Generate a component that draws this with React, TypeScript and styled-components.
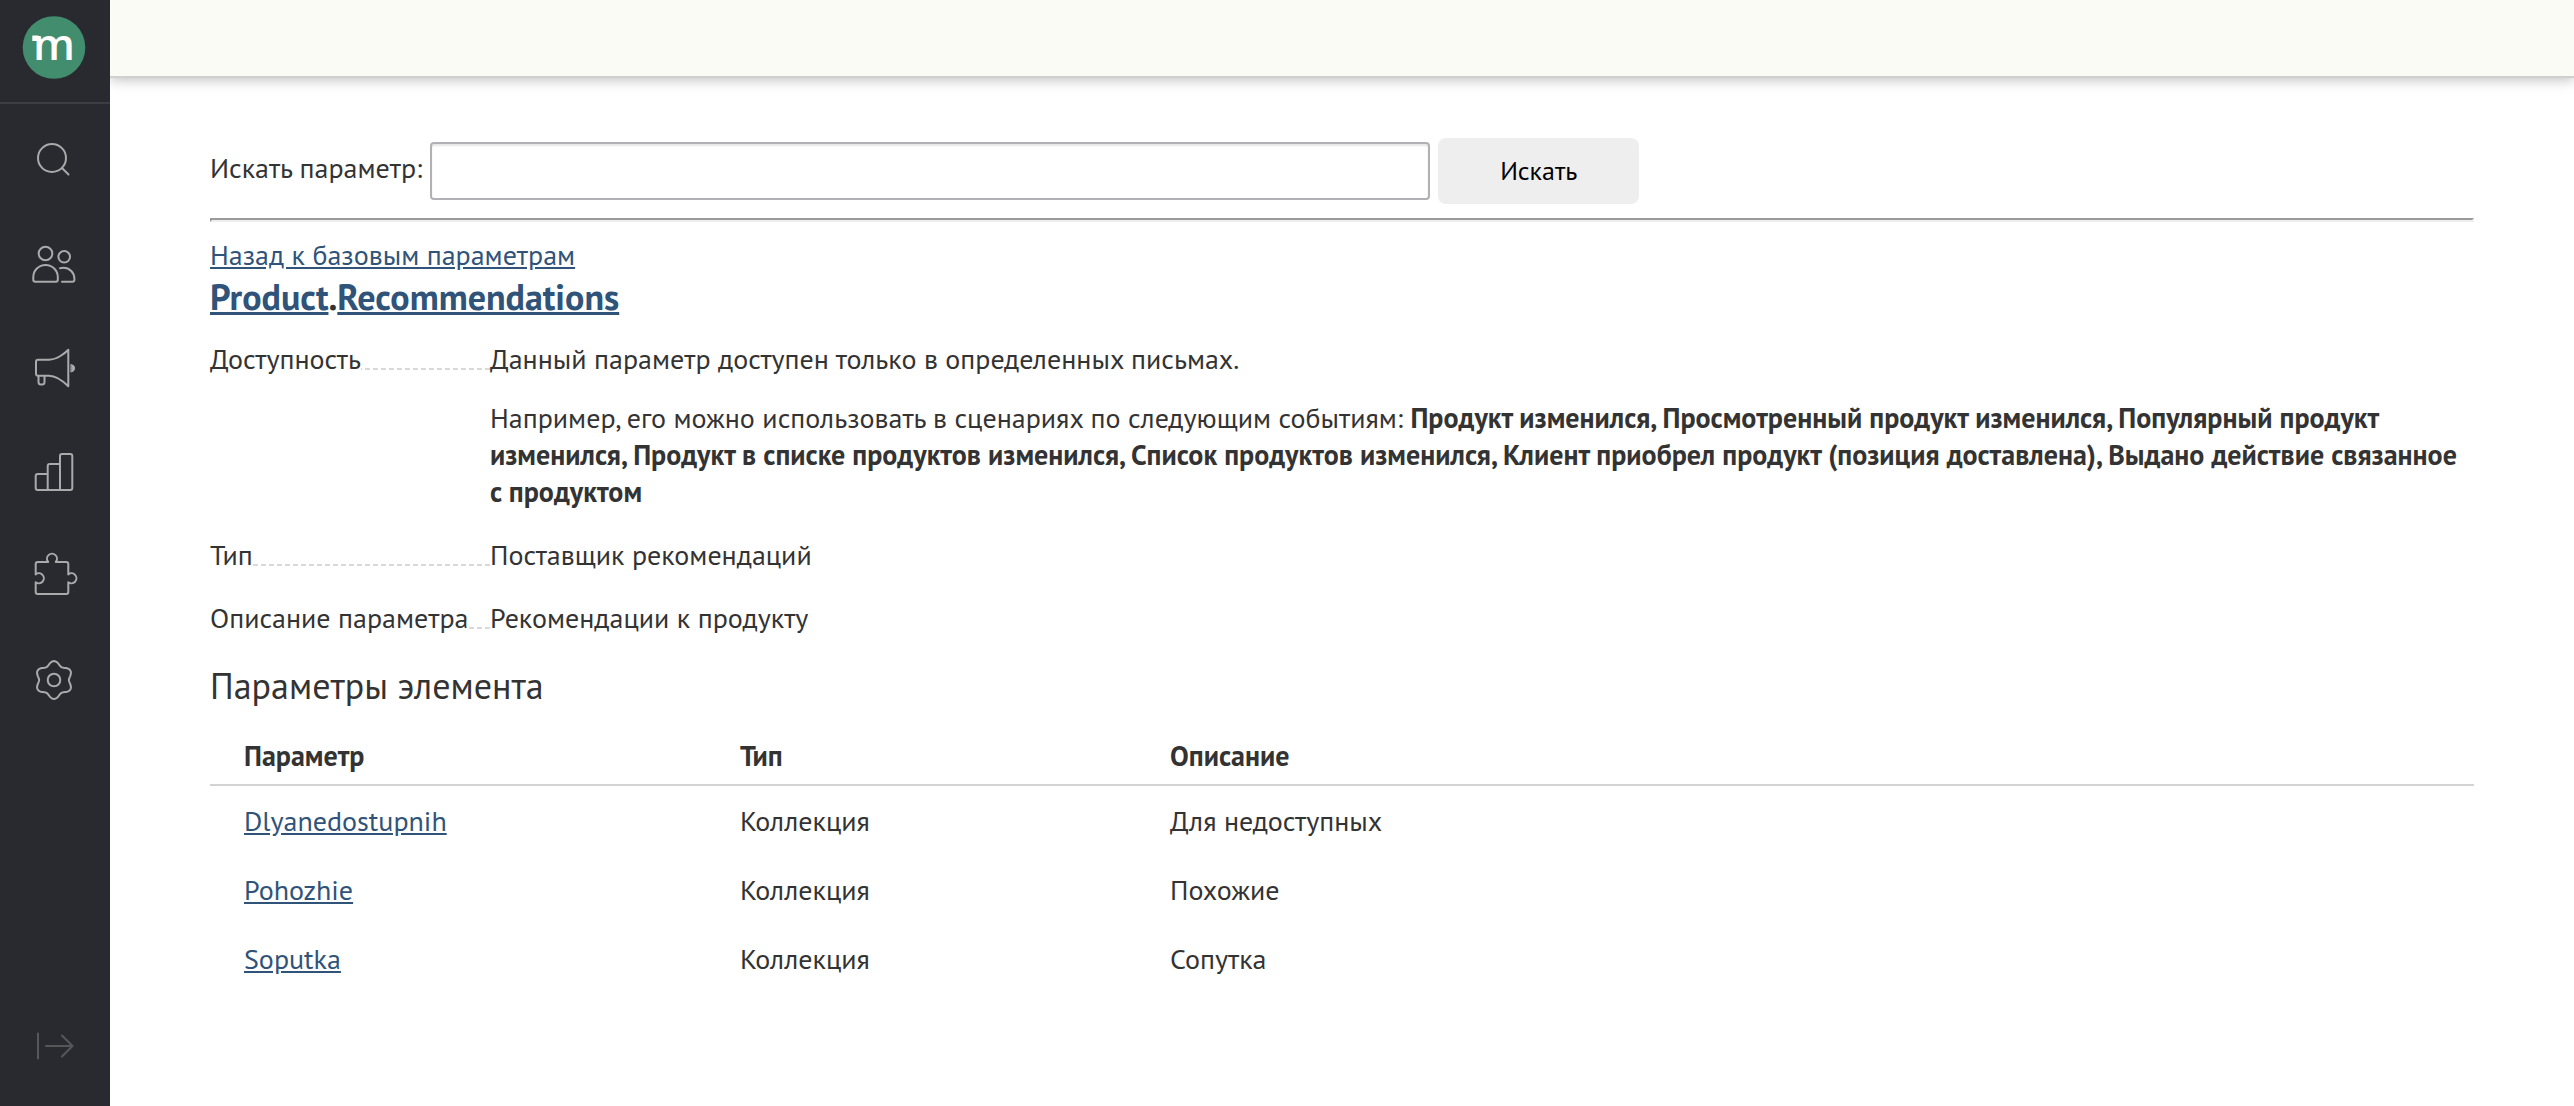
import React from 'react';
import styled, { createGlobalStyle } from 'styled-components';

const GlobalStyle = createGlobalStyle`
  *, *::before, *::after { box-sizing: border-box; }
  body {
    margin: 0;
    background: #fff;
    color: #333;
    font: 28px/37px "PT Sans", "Noto Sans", sans-serif;
  }
`;

const Page = styled.div`
  display: flex;
  min-height: 100vh;
`;

const Sidebar = styled.aside`
  flex: none;
  width: 110px;
  display: flex;
  flex-direction: column;
  background: #292a2f;
`;

const LogoLink = styled.a`
  display: flex;
  justify-content: center;
  height: 104px;
  padding: 15px 2px 0 0;
  border-bottom: 2px solid #3d3e43;
`;

const Nav = styled.nav`
  flex: 1;
  display: flex;
  flex-direction: column;
`;

const NavLink = styled.a`
  display: flex;
  justify-content: center;
  height: 105px;
  padding-top: 28px;
  color: #a9aaad;
`;

const CollapseButton = styled.button`
  display: flex;
  justify-content: center;
  border: 0;
  padding: 0 0 36px;
  background: none;
  color: #56575b;
  cursor: pointer;
`;

const IconSvg = styled.svg`
  flex: none;
  width: 48px;
  height: 48px;
  fill: none;
  stroke: currentColor;
  stroke-width: 2;
  stroke-linecap: round;
  stroke-linejoin: round;
`;

const LogoSvg = styled.svg`
  width: 64px;
  height: 64px;
  overflow: visible;
`;

const LogoLetter = styled.text`
  font: 600 44px "Open Sans", sans-serif;
  fill: #fff;
  text-anchor: middle;
`;

const Main = styled.div`
  flex: 1;
  min-width: 0;
`;

const TopBar = styled.header`
  height: 78px;
  background: #fafbf5;
  border-bottom: 2px solid #d0d1cf;
  box-shadow: 0 2px 12px rgba(0, 0, 0, 0.25);
  clip-path: inset(0 0 -20px 0);
`;

const Content = styled.main`
  padding: 60px 100px;
`;

const SearchForm = styled.form`
  display: flex;
  align-items: center;
  gap: 8px;
`;

const SearchLabel = styled.label`
  padding-bottom: 8px;
`;

const SearchInput = styled.input`
  width: 1000px;
  height: 58px;
  padding: 0 12px;
  border: 2px solid #b0b0b5;
  border-radius: 4px;
  box-shadow: inset 0 2px 2px rgba(0, 0, 0, 0.1);
  background: #fff;
  color: inherit;
  font: inherit;
`;

const SearchButton = styled.button`
  width: 201px;
  height: 66px;
  border: 0;
  border-radius: 8px;
  background: #eee;
  color: #000;
  font: 26px/34px "PT Sans", "Noto Sans", sans-serif;
  cursor: pointer;
`;

const Rule = styled.hr`
  height: 4px;
  margin: 14px 0;
  border: 2px solid;
  border-color: #9a9a9a #eee #eee #9a9a9a;
`;

const TextLink = styled.a`
  color: #2f5379;
  text-decoration: underline;
`;

const BackLine = styled.div`
  display: flex;
`;

const Title = styled.h1`
  margin: 0 0 19px;
  font-size: 36px;
  line-height: 48px;
  font-weight: 700;
`;

const Details = styled.dl`
  display: grid;
  grid-template-columns: 280px 1fr;
  row-gap: 26px;
  margin: 0 0 26px;
`;

const Term = styled.dt`
  display: flex;
  white-space: nowrap;

  &::after {
    content: "";
    flex: 1;
    height: 30px;
    background: repeating-linear-gradient(to left, #d9d9d9 0 5px, transparent 5px 8px) bottom / 100% 2px no-repeat;
  }
`;

const Definition = styled.dd`
  margin: 0;
`;

const Paragraph = styled.p`
  margin: 0;

  & + & { margin-top: 22px; }
`;

const Heading = styled.h2`
  margin: 0 0 11px;
  font-size: 36px;
  line-height: 48px;
  font-weight: 400;
`;

const Table = styled.table`
  width: 100%;
  border-spacing: 0;
  table-layout: fixed;
`;

const HeadCell = styled.th<{ $width?: number }>`
  width: ${({ $width }) => ($width ? `${$width}px` : 'auto')};
  padding: 16px 34px 10px;
  border-bottom: 2px solid #d3d3d3;
  text-align: left;
  font-weight: 700;
`;

const Cell = styled.td`
  padding: 16px 34px;
`;

const gearOutline = Array.from({ length: 120 }, (_, i) => {
  const angle = (i / 120) * Math.PI * 2;
  const radius = 16.9 - 2 * Math.cos(6 * angle);
  return `${(23 + radius * Math.cos(angle)).toFixed(2)},${(23 + radius * Math.sin(angle)).toFixed(2)}`;
}).join(' ');

const SearchIcon = (
  <>
    <circle cx="21" cy="26" r="14" />
    <path d="M31 36l6.5 6.5" />
  </>
);

const UsersIcon = (
  <>
    <circle cx="14.5" cy="16.5" r="6.8" />
    <circle cx="33.2" cy="19.8" r="5.8" />
    <path d="M4.3 44.7h20.5a2 2 0 0 0 2-2V40a12.2 12 0 0 0-24.5 0v2.7a2 2 0 0 0 2 2z" />
    <path d="M29 31.2c1.2-.3 2.4-.4 3.6-.4a10.8 10.8 0 0 1 10.8 10.8v1.1a2 2 0 0 1-2 2H31" />
  </>
);

const MegaphoneIcon = (
  <>
    <path d="M7 17.7h11c8 0 16-6.5 19.3-10v36.6c-4-4-12-10.6-19.3-10.6H7a2 2 0 0 1-2-2v-12a2 2 0 0 1 2-2z" />
    <path d="M7.5 34v6a2.5 2.5 0 0 0 2.5 2.5h1a2.5 2.5 0 0 0 2.5-2.5v-6" />
    <path d="M40.3 22.5a4 3.8 0 0 1 0 7.5z" fill="currentColor" strokeWidth="1" />
  </>
);

const ChartIcon = (
  <path d="M16.7 43V19a2 2 0 0 1 2-2H29M16.7 27h-10a2 2 0 0 0-2 2v12a2 2 0 0 0 2 2h32.6a2 2 0 0 0 2-2V9a2 2 0 0 0-2-2H31a2 2 0 0 0-2 2v34" />
);

const PuzzleIcon = (
  <path d="M6.7 10H17.2a5 5 0 1 1 7.6 0h10.5a2 2 0 0 1 2 2v10.4a5 5 0 1 1 0 7.8V40a2 2 0 0 1-2 2H6.7a2 2 0 0 1-2-2v-9.8a5 5 0 1 0 0-7.8V12a2 2 0 0 1 2-2z" />
);

const GearIcon = (
  <>
    <polygon points={gearOutline} />
    <circle cx="23" cy="23" r="6.3" />
  </>
);

const navItems = [
  { label: 'Поиск', icon: SearchIcon },
  { label: 'Клиенты', icon: UsersIcon },
  { label: 'Кампании', icon: MegaphoneIcon },
  { label: 'Отчеты', icon: ChartIcon },
  { label: 'Интеграции', icon: PuzzleIcon },
  { label: 'Настройки', icon: GearIcon },
];

const rows = [
  { name: 'Dlyanedostupnih', type: 'Коллекция', description: 'Для недоступных' },
  { name: 'Pohozhie', type: 'Коллекция', description: 'Похожие' },
  { name: 'Soputka', type: 'Коллекция', description: 'Сопутка' },
];

export default function App() {
  return (
    <Page>
      <GlobalStyle />
      <Sidebar>
        <LogoLink href="#" aria-label="Главная">
          <LogoSvg viewBox="0 0 64 64">
            <circle cx="32" cy="32.5" r="31.3" fill="#418d6d" />
            <rect x="10.3" y="20.5" width="6" height="5.5" fill="#fff" />
            <LogoLetter x="32" y="45">m</LogoLetter>
          </LogoSvg>
        </LogoLink>
        <Nav>
          {navItems.map(({ label, icon }) => (
            <NavLink key={label} href="#" aria-label={label}>
              <IconSvg viewBox="0 0 48 48">{icon}</IconSvg>
            </NavLink>
          ))}
        </Nav>
        <CollapseButton type="button" aria-label="Развернуть меню">
          <IconSvg viewBox="0 0 48 48">
            <path d="M7 11.5v25M15 24h26M31 13.5L41.5 24 31 34.5" />
          </IconSvg>
        </CollapseButton>
      </Sidebar>
      <Main>
        <TopBar />
        <Content>
          <SearchForm onSubmit={(event) => event.preventDefault()}>
            <SearchLabel htmlFor="parameter-search">Искать параметр:</SearchLabel>
            <SearchInput id="parameter-search" type="text" />
            <SearchButton type="submit">Искать</SearchButton>
          </SearchForm>
          <Rule />
          <BackLine>
            <TextLink href="#">Назад к базовым параметрам</TextLink>
          </BackLine>
          <Title>
            <TextLink href="#">Product</TextLink>.<TextLink href="#">Recommendations</TextLink>
          </Title>
          <Details>
            <Term>Доступность</Term>
            <Definition>
              <Paragraph>Данный параметр доступен только в определенных письмах.</Paragraph>
              <Paragraph>
                Например, его можно использовать в сценариях по следующим событиям:{' '}
                <b>
                  Продукт изменился, Просмотренный продукт изменился, Популярный продукт изменился, Продукт в списке
                  продуктов изменился, Список продуктов изменился, Клиент приобрел продукт (позиция доставлена), Выдано
                  действие связанное с продуктом
                </b>
              </Paragraph>
            </Definition>
            <Term>Тип</Term>
            <Definition>Поставщик рекомендаций</Definition>
            <Term>Описание параметра</Term>
            <Definition>Рекомендации к продукту</Definition>
          </Details>
          <Heading>Параметры элемента</Heading>
          <Table>
            <thead>
              <tr>
                <HeadCell $width={496}>Параметр</HeadCell>
                <HeadCell $width={430}>Тип</HeadCell>
                <HeadCell>Описание</HeadCell>
              </tr>
            </thead>
            <tbody>
              {rows.map((row) => (
                <tr key={row.name}>
                  <Cell>
                    <TextLink href="#">{row.name}</TextLink>
                  </Cell>
                  <Cell>{row.type}</Cell>
                  <Cell>{row.description}</Cell>
                </tr>
              ))}
            </tbody>
          </Table>
        </Content>
      </Main>
    </Page>
  );
}
